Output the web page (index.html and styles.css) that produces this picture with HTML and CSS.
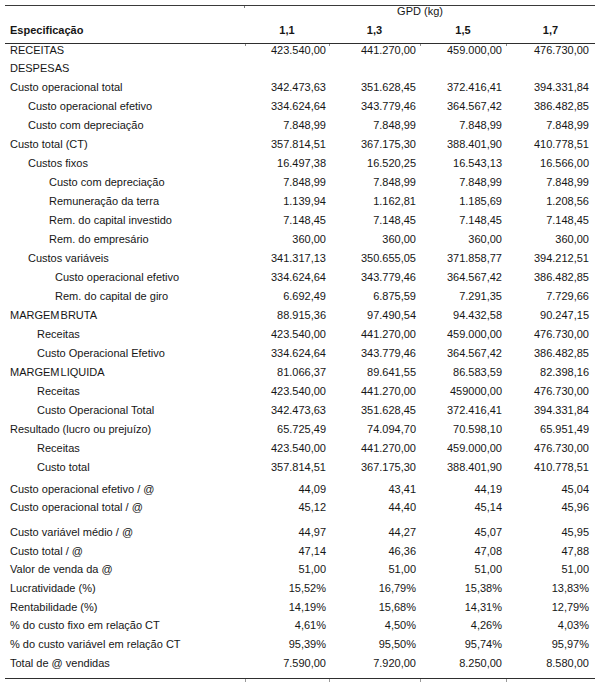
FILE: index.html
```html
<!DOCTYPE html>
<html lang="pt">
<head>
<meta charset="utf-8">
<title>Especificação - GPD (kg)</title>
<link rel="stylesheet" href="styles.css">
</head>
<body>
<div class="sheet">
  <div class="group-row"><div></div><div class="gpd">GPD (kg)</div></div>
  <div class="row head"><div class="l">Especificação</div><div class="n">1,1</div><div class="n">1,3</div><div class="n">1,5</div><div class="n">1,7</div></div>

  <div class="row first"><div class="l">RECEITAS</div><div class="n">423.540,00</div><div class="n">441.270,00</div><div class="n">459.000,00</div><div class="n">476.730,00</div></div>
  <div class="row"><div class="l">DESPESAS</div><div class="n"></div><div class="n"></div><div class="n"></div><div class="n"></div></div>
  <div class="row"><div class="l">Custo operacional total</div><div class="n">342.473,63</div><div class="n">351.628,45</div><div class="n">372.416,41</div><div class="n">394.331,84</div></div>
  <div class="row"><div class="l i1">Custo operacional efetivo</div><div class="n">334.624,64</div><div class="n">343.779,46</div><div class="n">364.567,42</div><div class="n">386.482,85</div></div>
  <div class="row"><div class="l i1">Custo com depreciação</div><div class="n">7.848,99</div><div class="n">7.848,99</div><div class="n">7.848,99</div><div class="n">7.848,99</div></div>
  <div class="row"><div class="l">Custo total (CT)</div><div class="n">357.814,51</div><div class="n">367.175,30</div><div class="n">388.401,90</div><div class="n">410.778,51</div></div>
  <div class="row"><div class="l i1">Custos fixos</div><div class="n">16.497,38</div><div class="n">16.520,25</div><div class="n">16.543,13</div><div class="n">16.566,00</div></div>
  <div class="row"><div class="l i2">Custo com depreciação</div><div class="n">7.848,99</div><div class="n">7.848,99</div><div class="n">7.848,99</div><div class="n">7.848,99</div></div>
  <div class="row"><div class="l i2">Remuneração da terra</div><div class="n">1.139,94</div><div class="n">1.162,81</div><div class="n">1.185,69</div><div class="n">1.208,56</div></div>
  <div class="row"><div class="l i2">Rem. do capital investido</div><div class="n">7.148,45</div><div class="n">7.148,45</div><div class="n">7.148,45</div><div class="n">7.148,45</div></div>
  <div class="row"><div class="l i2">Rem. do empresário</div><div class="n">360,00</div><div class="n">360,00</div><div class="n">360,00</div><div class="n">360,00</div></div>
  <div class="row"><div class="l i1">Custos variáveis</div><div class="n">341.317,13</div><div class="n">350.655,05</div><div class="n">371.858,77</div><div class="n">394.212,51</div></div>
  <div class="row"><div class="l i3">Custo operacional efetivo</div><div class="n">334.624,64</div><div class="n">343.779,46</div><div class="n">364.567,42</div><div class="n">386.482,85</div></div>
  <div class="row"><div class="l i3">Rem. do capital de giro</div><div class="n">6.692,49</div><div class="n">6.875,59</div><div class="n">7.291,35</div><div class="n">7.729,66</div></div>
  <div class="row"><div class="l tight">MARGEM BRUTA</div><div class="n">88.915,36</div><div class="n">97.490,54</div><div class="n">94.432,58</div><div class="n">90.247,15</div></div>
  <div class="row"><div class="l im">Receitas</div><div class="n">423.540,00</div><div class="n">441.270,00</div><div class="n">459.000,00</div><div class="n">476.730,00</div></div>
  <div class="row"><div class="l im">Custo Operacional Efetivo</div><div class="n">334.624,64</div><div class="n">343.779,46</div><div class="n">364.567,42</div><div class="n">386.482,85</div></div>
  <div class="row"><div class="l tight">MARGEM LIQUIDA</div><div class="n">81.066,37</div><div class="n">89.641,55</div><div class="n">86.583,59</div><div class="n">82.398,16</div></div>
  <div class="row"><div class="l im">Receitas</div><div class="n">423.540,00</div><div class="n">441.270,00</div><div class="n">459000,00</div><div class="n">476.730,00</div></div>
  <div class="row"><div class="l im">Custo Operacional Total</div><div class="n">342.473,63</div><div class="n">351.628,45</div><div class="n">372.416,41</div><div class="n">394.331,84</div></div>
  <div class="row"><div class="l">Resultado (lucro ou prejuízo)</div><div class="n">65.725,49</div><div class="n">74.094,70</div><div class="n">70.598,10</div><div class="n">65.951,49</div></div>
  <div class="row"><div class="l im">Receitas</div><div class="n">423.540,00</div><div class="n">441.270,00</div><div class="n">459.000,00</div><div class="n">476.730,00</div></div>
  <div class="row"><div class="l im">Custo total</div><div class="n">357.814,51</div><div class="n">367.175,30</div><div class="n">388.401,90</div><div class="n">410.778,51</div></div>

  <div class="row low gap-s"><div class="l">Custo operacional efetivo / @</div><div class="n">44,09</div><div class="n">43,41</div><div class="n">44,19</div><div class="n">45,04</div></div>
  <div class="row low"><div class="l">Custo operacional total / @</div><div class="n">45,12</div><div class="n">44,40</div><div class="n">45,14</div><div class="n">45,96</div></div>
  <div class="row low gap-l"><div class="l">Custo variável médio / @</div><div class="n">44,97</div><div class="n">44,27</div><div class="n">45,07</div><div class="n">45,95</div></div>
  <div class="row low"><div class="l">Custo total / @</div><div class="n">47,14</div><div class="n">46,36</div><div class="n">47,08</div><div class="n">47,88</div></div>
  <div class="row low"><div class="l">Valor de venda da @</div><div class="n">51,00</div><div class="n">51,00</div><div class="n">51,00</div><div class="n">51,00</div></div>
  <div class="row low"><div class="l">Lucratividade (%)</div><div class="n">15,52%</div><div class="n">16,79%</div><div class="n">15,38%</div><div class="n">13,83%</div></div>
  <div class="row low"><div class="l">Rentabilidade (%)</div><div class="n">14,19%</div><div class="n">15,68%</div><div class="n">14,31%</div><div class="n">12,79%</div></div>
  <div class="row low"><div class="l">% do custo fixo em relação CT</div><div class="n">4,61%</div><div class="n">4,50%</div><div class="n">4,26%</div><div class="n">4,03%</div></div>
  <div class="row low"><div class="l">% do custo variável em relação CT</div><div class="n">95,39%</div><div class="n">95,50%</div><div class="n">95,74%</div><div class="n">95,97%</div></div>
  <div class="row low last"><div class="l">Total de @ vendidas</div><div class="n">7.590,00</div><div class="n">7.920,00</div><div class="n">8.250,00</div><div class="n">8.580,00</div></div>
</div>
<div class="ticks"><div></div><div class="t"></div><div class="t"></div><div class="t"></div><div class="t"></div></div>
</body>
</html>
```

FILE: styles.css
```css
body {
  margin: 0;
  background: #ffffff;
  font-family: "Liberation Sans", Arial, sans-serif;
  font-size: 11px;
  color: #161616;
}

.sheet {
  width: 590px;
  margin: 5px 0 0 5px;
  border-top: 1px solid #3a3a3a;
  border-bottom: 1px solid #2e2e2e;
}

.group-row {
  display: grid;
  grid-template-columns: 240px 350px;
  height: 12px;
  line-height: 11px;
}

.group-row > div:first-child {
  background: linear-gradient(#7a7a7a, #7a7a7a) right top / 1px 2px no-repeat;
}

.gpd {
  text-align: center;
  white-space: nowrap;
}

.row {
  display: grid;
  grid-template-columns: 240px 84px 91px 86px 89px;
  line-height: 19px;
  white-space: nowrap;
}

.row .l {
  padding-left: 5px;
}

.row .n {
  text-align: right;
}

.row .n:nth-child(2) { padding-right: 3px; }
.row .n:nth-child(3) { padding-right: 4px; }
.row .n:nth-child(4) { padding-right: 4px; }
.row .n:nth-child(5) { padding-right: 6px; }

.head {
  font-weight: bold;
  padding: 3px 0;
  border-bottom: 1px solid #2e2e2e;
}

.head .n,
.head .n:nth-child(n) {
  text-align: center;
  padding-right: 0;
}

.first {
  line-height: 12px;
  padding-bottom: 3px;
}

.first .n {
  background: linear-gradient(#8a8a8a, #8a8a8a) left top / 1px 2px no-repeat;
}

.i1 { padding-left: 23px !important; }
.i2 { padding-left: 44px !important; }
.i3 { padding-left: 50px !important; }
.im { padding-left: 32px !important; }

.tight {
  word-spacing: -2px;
}

.low {
  line-height: 18.7px;
}

.gap-s {
  margin-top: 2.5px;
}

.gap-l {
  margin-top: 6px;
}

.last {
  padding-bottom: 5px;
}

.ticks {
  display: grid;
  grid-template-columns: 240px 84px 91px 86px 89px;
  width: 590px;
  height: 3px;
  margin-left: 5px;
}

.ticks .t {
  border-left: 1px solid #9a9a9a;
}
```
